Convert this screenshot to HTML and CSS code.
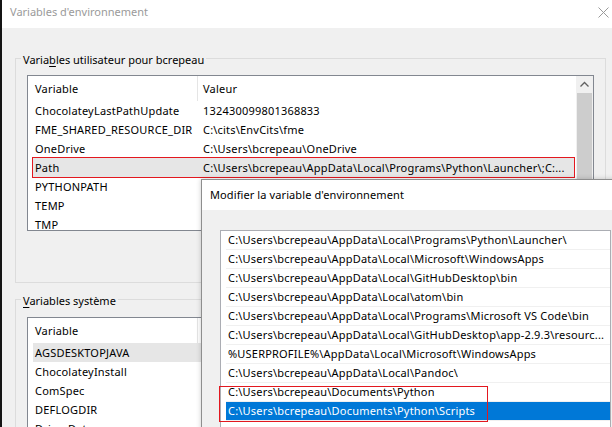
FILE: index.html
```html
<!DOCTYPE html>
<html lang="fr">
<head>
<meta charset="utf-8">
<title>Variables d'environnement</title>
<link rel="stylesheet" href="styles.css">
</head>
<body>
<div class="screen">
  <div class="edge"></div>
  <div class="window">
    <div class="titlebar">
      <span class="title">Variables d'environnement</span>
      <svg class="close" width="11" height="11" viewBox="0 0 11 11"><path d="M0.5 0.5 L10.5 10.5 M10.5 0.5 L0.5 10.5" stroke="#9a9a9a" stroke-width="1" fill="none"/></svg>
    </div>
    <div class="body">
      <section class="group user">
        <div class="group-label">Varia<u>b</u>les utilisateur pour bcrepeau</div>
        <div class="listview user-list">
          <div class="lv-main">
            <div class="lv-header"><div class="h1">Variable</div><div class="h2">Valeur</div></div>
            <div class="lv-row"><div class="c1">ChocolateyLastPathUpdate</div><div class="c2">132430099801368833</div></div>
            <div class="lv-row"><div class="c1">FME_SHARED_RESOURCE_DIR</div><div class="c2">C:\cits\EnvCits\fme</div></div>
            <div class="lv-row"><div class="c1">OneDrive</div><div class="c2">C:\Users\bcrepeau\OneDrive</div></div>
            <div class="lv-row selected marked"><div class="c1">Path</div><div class="c2">C:\Users\bcrepeau\AppData\Local\Programs\Python\Launcher\;C:...</div></div>
            <div class="lv-row"><div class="c1">PYTHONPATH</div><div class="c2"></div></div>
            <div class="lv-row"><div class="c1">TEMP</div><div class="c2"></div></div>
            <div class="lv-row"><div class="c1">TMP</div><div class="c2"></div></div>
          </div>
          <div class="scrollbar">
            <div class="sb-btn"><svg width="17" height="17" viewBox="0 0 17 17"><polyline points="4.5,10.5 8.5,6.5 12.5,10.5" stroke="#606060" stroke-width="1.3" fill="none"/></svg></div>
            <div class="sb-thumb"></div>
          </div>
        </div>
      </section>
      <section class="group system">
        <div class="group-label"><u>V</u>ariables système</div>
        <div class="listview system-list">
          <div class="lv-main">
            <div class="lv-header"><div class="h1">Variable</div><div class="h2"></div></div>
            <div class="lv-row selected"><div class="c1">AGSDESKTOPJAVA</div><div class="c2"></div></div>
            <div class="lv-row"><div class="c1">ChocolateyInstall</div><div class="c2"></div></div>
            <div class="lv-row"><div class="c1">ComSpec</div><div class="c2"></div></div>
            <div class="lv-row"><div class="c1">DEFLOGDIR</div><div class="c2"></div></div>
            <div class="lv-row"><div class="c1">DriverData</div><div class="c2"></div></div>
          </div>
        </div>
      </section>
    </div>
  </div>

  <div class="dialog">
    <div class="dlg-title">Modifier la variable d'environnement</div>
    <div class="dlg-body">
      <div class="listbox">
        <div class="lb-row">C:\Users\bcrepeau\AppData\Local\Programs\Python\Launcher\</div>
        <div class="lb-row">C:\Users\bcrepeau\AppData\Local\Microsoft\WindowsApps</div>
        <div class="lb-row">C:\Users\bcrepeau\AppData\Local\GitHubDesktop\bin</div>
        <div class="lb-row">C:\Users\bcrepeau\AppData\Local\atom\bin</div>
        <div class="lb-row">C:\Users\bcrepeau\AppData\Local\Programs\Microsoft VS Code\bin</div>
        <div class="lb-row">C:\Users\bcrepeau\AppData\Local\GitHubDesktop\app-2.9.3\resourc...</div>
        <div class="lb-row">%USERPROFILE%\AppData\Local\Microsoft\WindowsApps</div>
        <div class="lb-row">C:\Users\bcrepeau\AppData\Local\Pandoc\</div>
        <div class="lb-row">C:\Users\bcrepeau\Documents\Python</div>
        <div class="lb-row active">C:\Users\bcrepeau\Documents\Python\Scripts</div>
        <div class="lb-row"></div>
        <div class="red-mark"></div>
      </div>
    </div>
  </div>
</div>
</body>
</html>
```

FILE: styles.css
```css
* { box-sizing: border-box; }

body {
  margin: 0;
  width: 612px;
  height: 427px;
  overflow: hidden;
  font-family: "Noto Sans", "Open Sans", sans-serif;
  font-size: 11px;
  color: #000;
  background: #f0f0f0;
}

.screen {
  position: relative;
  display: flex;
  width: 612px;
  height: 427px;
  overflow: hidden;
}

.edge {
  flex: none;
  width: 2px;
  background: #141414;
}

.window {
  flex: 1;
  min-width: 0;
  display: flex;
  flex-direction: column;
  background: #f0f0f0;
}

.titlebar {
  flex: none;
  height: 28px;
  background: #fff;
  display: flex;
  align-items: flex-start;
  justify-content: space-between;
  padding: 4px 3px 0 8px;
}

.title {
  line-height: 15px;
  color: #9a9a9a;
}

.close {
  margin-top: 3px;
  display: block;
}

.body {
  flex: 1;
  padding: 30px 6px 0 13px;
}

.group {
  position: relative;
  border: 1px solid #dcdcdc;
}

.group.user {
  padding: 16px 11px 51px 11px;
}

.group.system {
  margin-top: 16px;
  padding: 17px 11px 0 11px;
  height: 200px;
}

.group-label {
  position: absolute;
  top: -7px;
  left: 5px;
  padding: 0 2px;
  line-height: 15px;
  background: #f0f0f0;
  white-space: nowrap;
}

.group-label u {
  text-underline-offset: 2px;
}

.listview {
  display: flex;
  border: 1px solid #828790;
  background: #fff;
}

.user-list {
  height: 156px;
}

.system-list {
  height: 160px;
}

.lv-main {
  flex: 1;
  min-width: 0;
  overflow: hidden;
}

.lv-header {
  display: flex;
  height: 25px;
  line-height: 25px;
  letter-spacing: 0.2px;
}

.h1 {
  flex: none;
  width: 170px;
  padding-left: 7px;
  border-right: 1px solid #e5e5e5;
}

.h2 {
  flex: 1;
  padding-left: 5px;
}

.lv-row {
  display: flex;
  height: 19px;
  line-height: 19px;
  margin: 0 2px 0 5px;
  white-space: nowrap;
  letter-spacing: 0.2px;
}

.lv-row.selected {
  background: #e6e6e6;
}

.lv-row.marked {
  outline: 1px solid #e3181f;
}

.c1 {
  flex: none;
  width: 165px;
  padding-left: 2px;
  overflow: hidden;
}

.c2 {
  flex: 1;
  min-width: 0;
  padding-left: 5px;
  overflow: hidden;
}

.scrollbar {
  flex: none;
  width: 17px;
  display: flex;
  flex-direction: column;
  background: #f0f0f0;
}

.sb-btn {
  flex: none;
  height: 17px;
}

.sb-btn svg {
  display: block;
}

.sb-thumb {
  flex: 1;
  margin: 0 1px 0 1px;
  background: #cdcdcd;
}

.dialog {
  position: absolute;
  left: 201px;
  top: 179px;
  width: 430px;
  height: 270px;
  border: 1px solid #8e8e8e;
  background: #f0f0f0;
  box-shadow: 0 0 5px rgba(0, 0, 0, 0.2);
}

.dlg-title {
  height: 30px;
  line-height: 30px;
  padding-left: 8px;
  background: #fff;
  letter-spacing: 0.1px;
}

.dlg-body {
  padding: 20px 0 0 18px;
}

.listbox {
  position: relative;
  width: 391px;
  height: 230px;
  border: 1px solid #abadb3;
  background: #fff;
}

.lb-row {
  height: 19px;
  line-height: 18px;
  margin-left: 5px;
  padding-left: 2px;
  border-bottom: 1px solid #f0f0f0;
  white-space: nowrap;
  overflow: hidden;
  letter-spacing: 0.2px;
}

.lb-row.active {
  background: #0078d7;
  color: #fff;
}

.red-mark {
  position: absolute;
  left: -2px;
  top: 155px;
  width: 269px;
  height: 36px;
  border: 1px solid #e3181f;
}
```
